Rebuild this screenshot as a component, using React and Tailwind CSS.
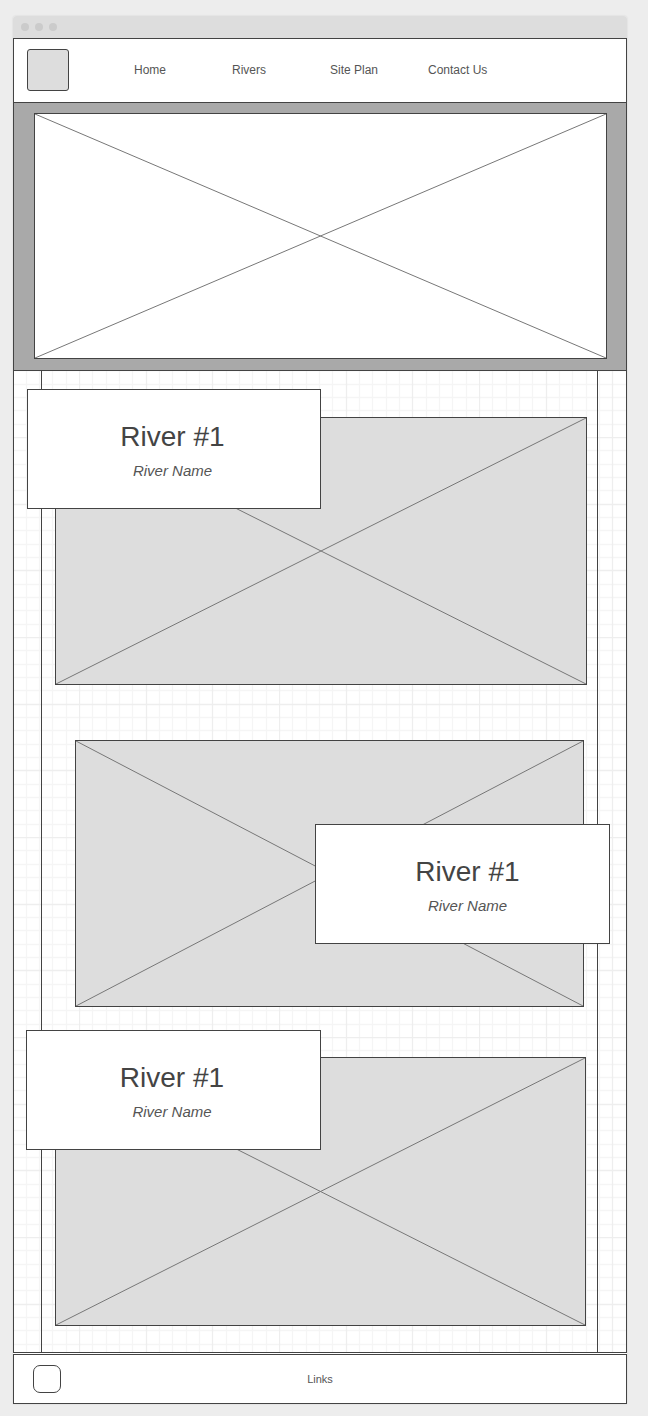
import React from "react";

const navItems = ["Home", "Rivers", "Site Plan", "Contact Us"];

const rivers = [
  {
    frame: "ml-[13px] mr-[10px] h-[268px]",
    card: "-left-[28px] -top-[28px] w-[294px] pr-[3px]",
  },
  {
    frame: "ml-[33px] mr-[13px] mt-[55px] h-[267px]",
    card: "-right-[26px] top-[84px] w-[295px] pl-[10px]",
  },
  {
    frame: "ml-[13px] mr-[11px] mt-[50px] h-[269px]",
    card: "-left-[29px] -top-[27px] w-[295px] pr-[3px]",
  },
];

// Fifteen cells over 200 units, every fifth line heavier.
const minorStops = [13, 27, 40, 53, 80, 93, 107, 120, 147, 160, 173, 187];
const majorStops = [0, 67, 133];

function linesAt(stops) {
  return stops.map((n) => `M${n + 0.5} 0V200M0 ${n + 0.5}H200`).join("");
}

function GraphPaper() {
  return (
    <svg className="absolute inset-0 h-full w-full" aria-hidden="true">
      <defs>
        <pattern id="graph-paper" x="65" y="66" width="200" height="200" patternUnits="userSpaceOnUse">
          <path d={linesAt(minorStops)} stroke="#f5f5f5" strokeWidth="1.3" />
          <path d={linesAt(majorStops)} stroke="#eeeeee" strokeWidth="1.3" />
        </pattern>
      </defs>
      <rect width="100%" height="100%" fill="url(#graph-paper)" />
    </svg>
  );
}

function ImagePlaceholder({ className }) {
  return (
    <div className={`border border-[#434343] ${className}`}>
      <svg className="block h-full w-full" aria-hidden="true">
        <line x1="0" y1="0" x2="100%" y2="100%" stroke="#777777" />
        <line x1="0" y1="100%" x2="100%" y2="0" stroke="#777777" />
      </svg>
    </div>
  );
}

function River({ frame, card }) {
  return (
    <section className={`relative ${frame}`}>
      <ImagePlaceholder className="h-full bg-[#dddddd]" />
      <div
        className={`absolute flex h-[120px] flex-col items-center border border-[#434343] bg-white pt-[30px] ${card}`}
      >
        <h2 className="text-[28px] leading-[34px] text-[#444444]">River #1</h2>
        <p className="mt-2 text-[15px] leading-[18px] text-[#555555] italic">River Name</p>
      </div>
    </section>
  );
}

export default function App() {
  return (
    <div className="flow-root bg-[#ededed] font-['Liberation_Sans',Arial,sans-serif]">
      <div className="mt-4 mr-[21px] mb-3 ml-[13px] rounded-t-[3px] bg-white shadow-[0_0_2px_rgba(0,0,0,0.12)]">
        <div className="flex h-[22px] items-center gap-[6px] rounded-t-[3px] bg-[#dddddd] pl-2">
          <span className="h-2 w-2 rounded-full bg-[#cbcbcb]" />
          <span className="h-2 w-2 rounded-full bg-[#cbcbcb]" />
          <span className="h-2 w-2 rounded-full bg-[#cbcbcb]" />
        </div>

        <header className="flex h-16 items-center border-x border-t border-[#434343] bg-white pb-[2px] pl-[13px]">
          <div className="h-[42px] w-[42px] shrink-0 rounded-[3px] border border-[#434343] bg-[#dddddd]" />
          <nav className="ml-[65px] flex text-[12px] leading-[16px] text-[#555555]">
            {navItems.map((item) => (
              <a key={item} href="#" className="w-[98px] whitespace-nowrap">
                {item}
              </a>
            ))}
          </nav>
        </header>

        <div className="border-x border-t border-[#434343] bg-[#a9a9a9] pt-[10px] pr-[19px] pb-[11px] pl-5">
          <ImagePlaceholder className="h-[246px] bg-white" />
        </div>

        <main className="relative border border-[#434343] bg-white pr-[28px] pl-[27px]">
          <GraphPaper />
          <div className="relative border-x border-[#434343] pt-[46px] pb-[26px]">
            {rivers.map((river, i) => (
              <River key={i} {...river} />
            ))}
          </div>
        </main>

        <footer className="mt-px grid h-[50px] grid-cols-[1fr_auto_1fr] items-center border border-[#434343] bg-white px-[19px]">
          <div className="h-7 w-7 rounded-[7px] border border-[#434343]" />
          <a href="#" className="text-[11px] leading-[14px] text-[#555555]">
            Links
          </a>
        </footer>
      </div>
    </div>
  );
}
